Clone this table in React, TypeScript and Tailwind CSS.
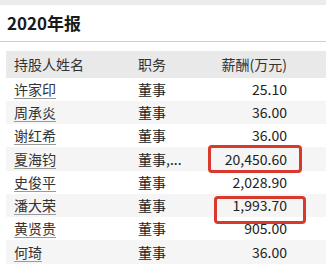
const rows = [
  { name: '许家印', role: '董事', pay: '25.10', h: 'h-[23px]' },
  { name: '周承炎', role: '董事', pay: '36.00', h: 'h-[23px]' },
  { name: '谢红希', role: '董事', pay: '36.00', h: 'h-[23px]' },
  { name: '夏海钧', role: '董事,...', pay: '20,450.60', h: 'h-[24px]' },
  { name: '史俊平', role: '董事', pay: '2,028.90', h: 'h-[23px]' },
  { name: '潘大荣', role: '董事', pay: '1,993.70', h: 'h-[23px]' },
  { name: '黄贤贵', role: '董事', pay: '905.00', h: 'h-[23px]' },
  { name: '何琦', role: '董事', pay: '36.00', h: 'h-[24px]' },
];

export default function App() {
  return (
    <div
      className="relative h-[267px] w-[326px] overflow-hidden bg-white text-[#333]"
      style={{ fontFamily: '"Noto Sans CJK SC", "Noto Sans", sans-serif' }}
    >
      <div className="h-[5px] bg-[#ececec]" />
      <div className="flex h-[37px] items-center border-b border-[#cfcfcf] pl-[7px]">
        <h1 className="text-[17px] font-bold text-[#1a1a1a]">2020年报</h1>
      </div>

      <div className="ml-[6px] mt-[9px]">
        <div className="grid h-[27px] grid-cols-[132px_78px_71px_1fr] items-center bg-[#e9e9e9] text-[14px]">
          <span className="pl-[8px]">持股人姓名</span>
          <span>职务</span>
          <span className="whitespace-nowrap text-right">薪酬(万元)</span>
          <span />
        </div>
        {rows.map((r, i) => (
          <div
            key={i}
            className={`grid grid-cols-[132px_78px_71px_1fr] items-center text-[14px] ${r.h} ${i % 2 === 1 ? 'bg-[#f5f5f5]' : 'bg-white'}`}
          >
            <span className="pl-[8px]">
              <span className="inline-block border-b border-[#9a9a9a] leading-[17px]">{r.name}</span>
            </span>
            <span className="text-[#222]">{r.role}</span>
            <span className="whitespace-nowrap text-right text-[#222]">{r.pay}</span>
            <span />
          </div>
        ))}
      </div>

      <div className="absolute left-[208px] top-[145px] h-[28px] w-[94px] rounded-[4px] border-[3px] border-[#d8392c]" />
      <div className="absolute left-[214px] top-[196px] h-[28px] w-[92px] rounded-[4px] border-[3px] border-[#d8392c]" />
    </div>
  );
}
